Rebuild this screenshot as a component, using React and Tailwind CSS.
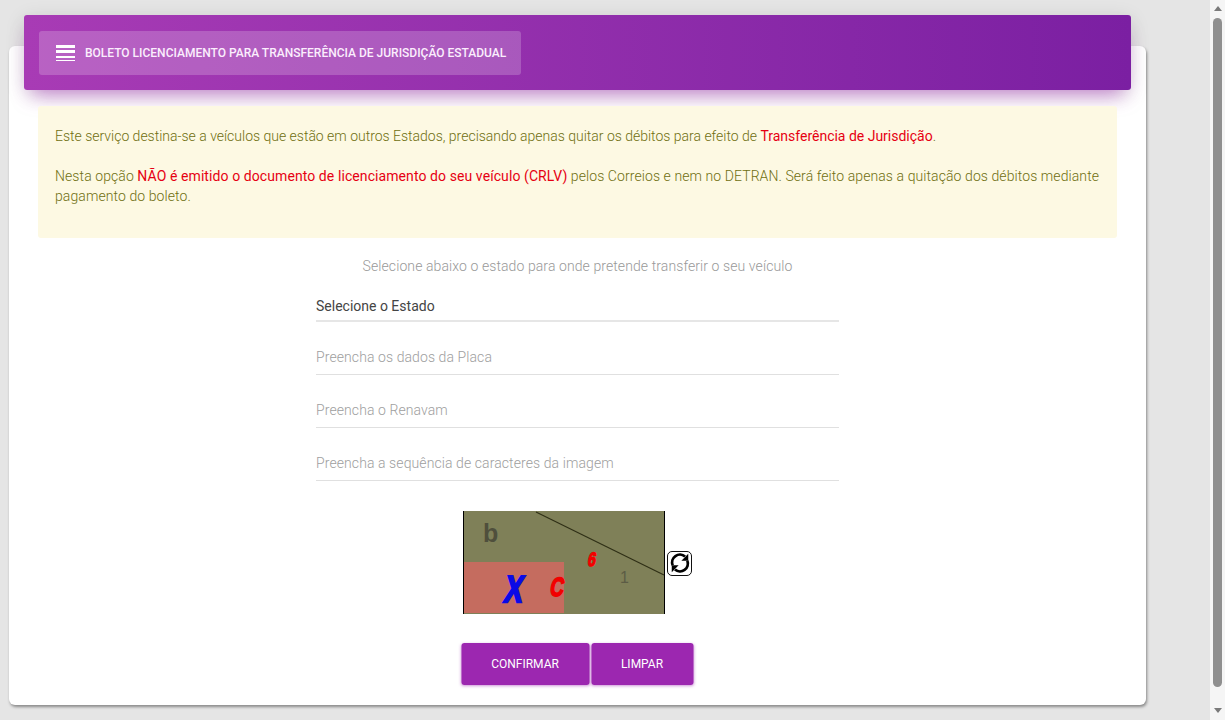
import React from "react";

const roboto = "font-['Roboto',sans-serif]";

function Field({ label, active }) {
  return (
    <div
      className={
        active
          ? "h-[29px] w-[523px] border-b-[2px] border-[#e6e6e6] pt-[1px] text-[14px] leading-[24px] text-[#444444]"
          : "mt-[22px] h-[31px] w-[523px] border-b border-[#e0e0e0] pt-[1px] text-[14px] font-light leading-[24px] tracking-[0.09px] text-[#9e9e9e]"
      }
    >
      {label}
    </div>
  );
}

function Captcha() {
  return (
    <svg viewBox="0 0 202 103" className="block h-[103px] w-[202px]">
      <rect width="202" height="103" fill="#7f8058" />
      <rect x="1" y="51" width="100" height="51" fill="#c56c5f" />
      <rect x="0" width="1" height="103" fill="#000" />
      <rect x="201" width="1" height="103" fill="#000" />
      <line x1="73" y1="1" x2="201" y2="64" stroke="#2f2f16" strokeWidth="1.2" />
      <text x="20" y="31" fontFamily="Liberation Sans" fontWeight="700" fontSize="25" fill="#4f4f3c">b</text>
      <text x="157" y="72" fontFamily="Liberation Sans" fontSize="16" fill="#5c5c45">1</text>
      <text x="0" y="0" transform="translate(124,55) skewX(-10) scale(0.95,1.3)" fontFamily="Liberation Sans" fontWeight="700" fontSize="15" fill="#f20000" stroke="#f20000" strokeWidth="1">6</text>
      <text x="0" y="0" transform="translate(86,85) skewX(-10) scale(0.85,1.2)" fontFamily="Liberation Sans" fontWeight="700" fontSize="22" fill="#f20000" stroke="#f20000" strokeWidth="1.4">C</text>
      <text x="0" y="0" transform="translate(40,91) skewX(-10) scale(1.05,1.45)" fontFamily="Liberation Sans" fontWeight="700" fontSize="26" fill="#0a0ae6" stroke="#0a0ae6" strokeWidth="1.6">X</text>
    </svg>
  );
}

function RefreshIcon() {
  return (
    <svg viewBox="0 0 24 24" className="h-[22px] w-[22px]" fill="none" stroke="#000" strokeWidth="3">
      <path d="M4 14.5A8.5 8.5 0 0 1 17.5 5" />
      <path d="M20 9.5A8.5 8.5 0 0 1 6.5 19" />
      <path d="M21 2v7.5h-7.5z" fill="#000" stroke="none" />
      <path d="M3 22v-7.5h7.5z" fill="#000" stroke="none" />
    </svg>
  );
}

export default function App() {
  return (
    <div className={`flex h-[720px] w-[1225px] overflow-hidden bg-[#e5e5e5] ${roboto}`}>
      <main className="w-[1210px] shrink-0 pl-[9px] pt-[46px]">
        <div className="flex h-[659px] w-[1137px] flex-col items-center rounded-[6px] bg-white shadow-[1px_2px_3px_rgba(0,0,0,0.4)]">
          <header className="-mt-[31px] h-[75px] w-[1107px] shrink-0 rounded-[3px] bg-gradient-to-r from-[#a83bb5] to-[#7b1fa2] p-[16px_15px] shadow-[0_12px_20px_-8px_rgba(156,39,176,0.55),0_4px_20px_rgba(0,0,0,0.12)]">
            <div className="flex h-[44px] w-[482px] items-center rounded-[3px] bg-white/20 pl-[17px]">
              <div className="flex h-[16px] w-[19px] flex-col justify-between">
                <span className="h-[3px] bg-white" />
                <span className="h-[3px] bg-white" />
                <span className="h-[2px] bg-white" />
                <span className="h-[1px] bg-white" />
              </div>
              <span className="ml-[10px] text-[12px] font-medium whitespace-nowrap text-[#fbeefd]">
                BOLETO LICENCIAMENTO PARA TRANSFERÊNCIA DE JURISDIÇÃO ESTADUAL
              </span>
            </div>
          </header>

          <div className="mt-[16px] h-[132px] w-[1079px] shrink-0 rounded-[3px] bg-[#fdf9e3] pl-[17px] pr-[15px] pt-[20px] text-[14px] font-light leading-[20px] text-[#6f6f10]">
            <p className="tracking-[-0.01px]">
              Este serviço destina-se a veículos que estão em outros Estados, precisando apenas quitar os débitos para efeito de{" "}
              <span className="font-normal text-[#e60012]">Transferência de Jurisdição</span>.
            </p>
            <p className="mt-[20px] tracking-[0.085px]">
              Nesta opção{" "}
              <span className="font-normal text-[#e60012]">NÃO é emitido o documento de licenciamento do seu veículo (CRLV)</span>{" "}
              pelos Correios e nem no DETRAN. Será feito apenas a quitação dos débitos mediante pagamento do boleto.
            </p>
          </div>

          <p className="mt-[18px] text-center text-[14px] font-light leading-[20px] tracking-[0.09px] text-[#999999]">
            Selecione abaixo o estado para onde pretende transferir o seu veículo
          </p>

          <div className="mt-[17px] flex flex-col items-center">
            <Field label="Selecione o Estado" active />
            <Field label="Preencha os dados da Placa" />
            <Field label="Preencha o Renavam" />
            <Field label="Preencha a sequência de caracteres da imagem" />
          </div>

          <div className="mt-[30px] flex w-[229px] items-center">
            <Captcha />
            <button className="ml-[2px] mt-[1px] flex h-[25px] w-[25px] items-center justify-center rounded-[5px] border border-[#111] bg-white">
              <RefreshIcon />
            </button>
          </div>

          <div className="mt-[29px] flex -translate-x-[0.5px] gap-[2px]">
            <button className="h-[42px] w-[128px] rounded-[3px] bg-[#9c27b0] text-[12px] text-white shadow-[0_1px_3px_rgba(156,39,176,0.5)]">
              CONFIRMAR
            </button>
            <button className="h-[42px] w-[102px] rounded-[3px] bg-[#9c27b0] text-[12px] text-white shadow-[0_1px_3px_rgba(156,39,176,0.5)]">
              LIMPAR
            </button>
          </div>
        </div>
      </main>

      <aside className="flex w-[15px] shrink-0 flex-col items-center bg-[#f5f5f5] pb-[7px] pt-[6px]">
        <span className="h-0 w-0 border-x-[4px] border-b-[5px] border-x-transparent border-b-[#7a7a7a]" />
        <span className="mb-[21px] mt-[7px] w-[9px] flex-1 rounded-full bg-[#8f8f8f]" />
        <span className="h-0 w-0 border-x-[4px] border-t-[5px] border-x-transparent border-t-[#7a7a7a]" />
      </aside>
    </div>
  );
}
